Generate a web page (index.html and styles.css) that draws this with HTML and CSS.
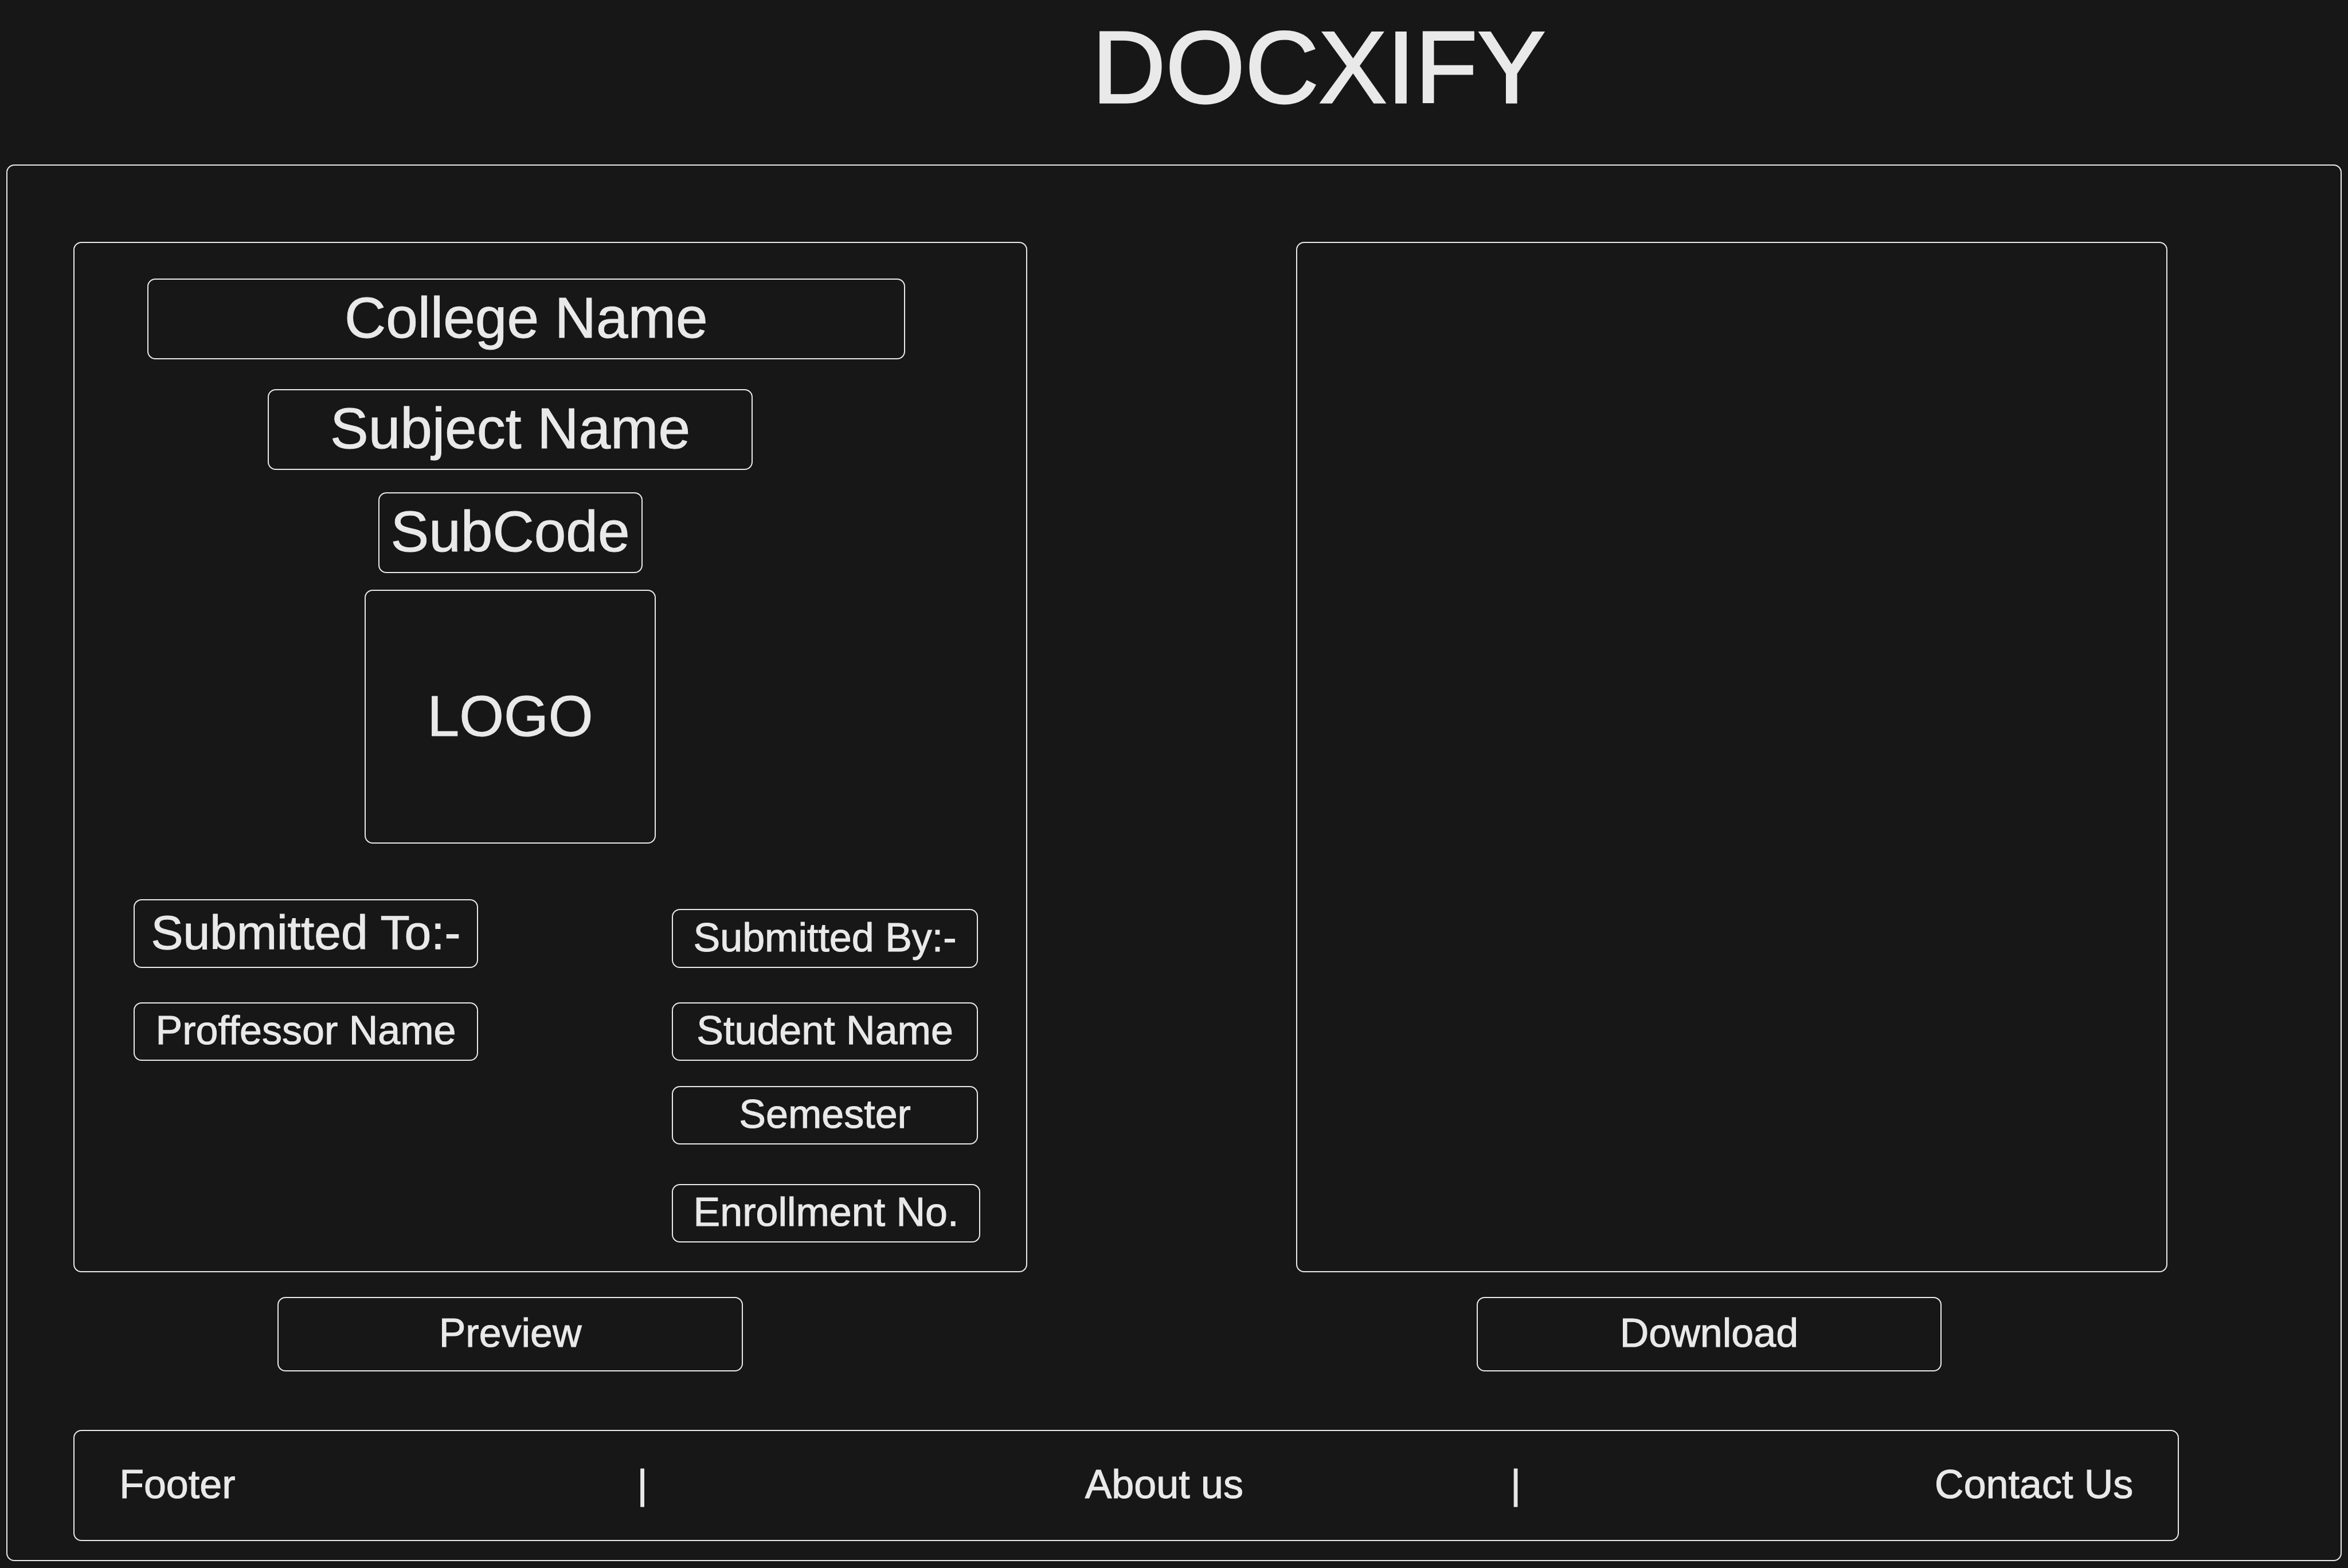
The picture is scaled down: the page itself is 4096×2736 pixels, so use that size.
FILE: index.html
```html
<!DOCTYPE html>
<html lang="en">
<head>
<meta charset="utf-8">
<meta name="viewport" content="width=device-width, initial-scale=1">
<title>DOCXIFY</title>
<link rel="stylesheet" href="styles.css">
</head>
<body>
<header class="site-header">
  <h1 class="site-title">DOCXIFY</h1>
</header>
<main class="frame">
  <div class="workspace">
    <form class="panel cover" id="cover">
      <div class="cover-head">
        <input class="box field field-large college" type="text" aria-label="College Name" placeholder="College Name">
        <input class="box field field-large subject" type="text" aria-label="Subject Name" placeholder="Subject Name">
        <input class="box field field-large subcode" type="text" aria-label="SubCode" placeholder="SubCode">
        <div class="box logo">LOGO</div>
      </div>
      <div class="people">
        <div class="professor">
          <label class="box submitted-to" for="professor">Submitted To:-</label>
          <input class="box field" id="professor" type="text" placeholder="Proffessor Name">
        </div>
        <div class="student">
          <label class="box submitted-by" for="student">Submitted By:-</label>
          <input class="box field student-name" id="student" type="text" placeholder="Student Name">
          <input class="box field semester" type="text" aria-label="Semester" placeholder="Semester">
          <input class="box field enrollment" type="text" aria-label="Enrollment No." placeholder="Enrollment No.">
        </div>
      </div>
    </form>
    <section class="panel preview-pane" aria-label="Document preview"></section>
    <button class="box action preview" type="submit" form="cover">Preview</button>
    <button class="box action download" type="button">Download</button>
  </div>
  <footer class="box site-footer">
    <span>Footer</span>
    <span>|</span>
    <a href="#about">About us</a>
    <span>|</span>
    <a href="#contact">Contact Us</a>
  </footer>
</main>
</body>
</html>
```
FILE: styles.css
```css
:root {
  --ink: #e9e9e9;
  --paper: #171717;
  --text: 70px;
  --text-medium: 84px;
  --text-large: 100px;
}

* {
  box-sizing: border-box;
}

body {
  margin: 0;
  padding: 0 11px 12px;
  background: var(--paper);
  color: var(--ink);
  font-family: "Liberation Sans", Arial, sans-serif;
  font-size: var(--text);
  line-height: 1;
  -webkit-text-stroke: 1px var(--ink);
}

.site-header {
  padding: 28px 0 79px 12.4%;
}

.site-title {
  margin: 0;
  font-size: 178px;
  font-weight: 400;
  line-height: 180px;
  text-align: center;
  -webkit-text-stroke-width: 3px;
}

.frame {
  padding: 133px 0 33px;
  border: 2px solid var(--ink);
  border-radius: 14px;
}

.workspace {
  display: grid;
  grid-template-columns: 115fr 1664fr 469fr 1520fr 302fr;
  row-gap: 43px;
}

.panel,
.box {
  border: 2px solid var(--ink);
  border-radius: 14px;
}

.box {
  display: flex;
  align-items: center;
  justify-content: center;
  padding: 0 0 4px;
  white-space: nowrap;
}

.cover {
  grid-column: 2;
  min-width: 0;
  padding: 62px 0 50px;
}

.preview-pane {
  grid-column: 4;
}

.field {
  width: 100%;
  height: 102px;
  margin: 0;
  background: transparent;
  color: inherit;
  font: inherit;
  text-align: center;
  -webkit-text-stroke: inherit;
}

.field::placeholder {
  color: var(--ink);
  opacity: 1;
}

.cover-head {
  display: flex;
  flex-direction: column;
  align-items: center;
  padding-right: 140px;
}

.field-large {
  height: 141px;
  font-size: var(--text-large);
}

.college {
  width: 87%;
  align-self: flex-end;
  margin-bottom: 52px;
  margin-right: 71px;
}

.subject {
  width: 846px;
  margin-bottom: 39px;
}

.subcode {
  width: 461px;
  margin-bottom: 29px;
}

.logo {
  width: 508px;
  height: 443px;
  font-size: var(--text-large);
}

.people {
  display: grid;
  grid-template-columns: 103fr 601fr 338fr 538fr 80fr;
  margin-top: 97px;
}

.professor,
.student {
  display: flex;
  flex-direction: column;
  min-width: 0;
}

.professor {
  grid-column: 2;
  gap: 60px;
}

.student {
  grid-column: 4;
  padding-top: 17px;
}

.submitted-to {
  height: 120px;
  font-size: var(--text-medium);
}

.submitted-by {
  height: 103px;
}

.submitted-by,
.student-name,
.semester {
  width: 99.3%;
}

.student-name {
  margin: 60px 0 44px;
}

.enrollment {
  margin-top: 69px;
}

.action {
  height: 130px;
  background: transparent;
  color: inherit;
  font: inherit;
  cursor: pointer;
  -webkit-text-stroke: inherit;
}

.preview {
  grid-column: 2;
  width: 48.8%;
  margin-left: 21.4%;
}

.download {
  grid-column: 4;
  width: 53.4%;
  margin-left: 20.7%;
}

.site-footer {
  display: grid;
  grid-template-columns: 903fr 781fr 742fr 740fr auto;
  justify-content: stretch;
  width: 90.25%;
  height: 194px;
  margin: 102px 0 0 2.83%;
  padding: 0 78px 4px;
}

.site-footer a {
  color: inherit;
  text-decoration: none;
}
```
